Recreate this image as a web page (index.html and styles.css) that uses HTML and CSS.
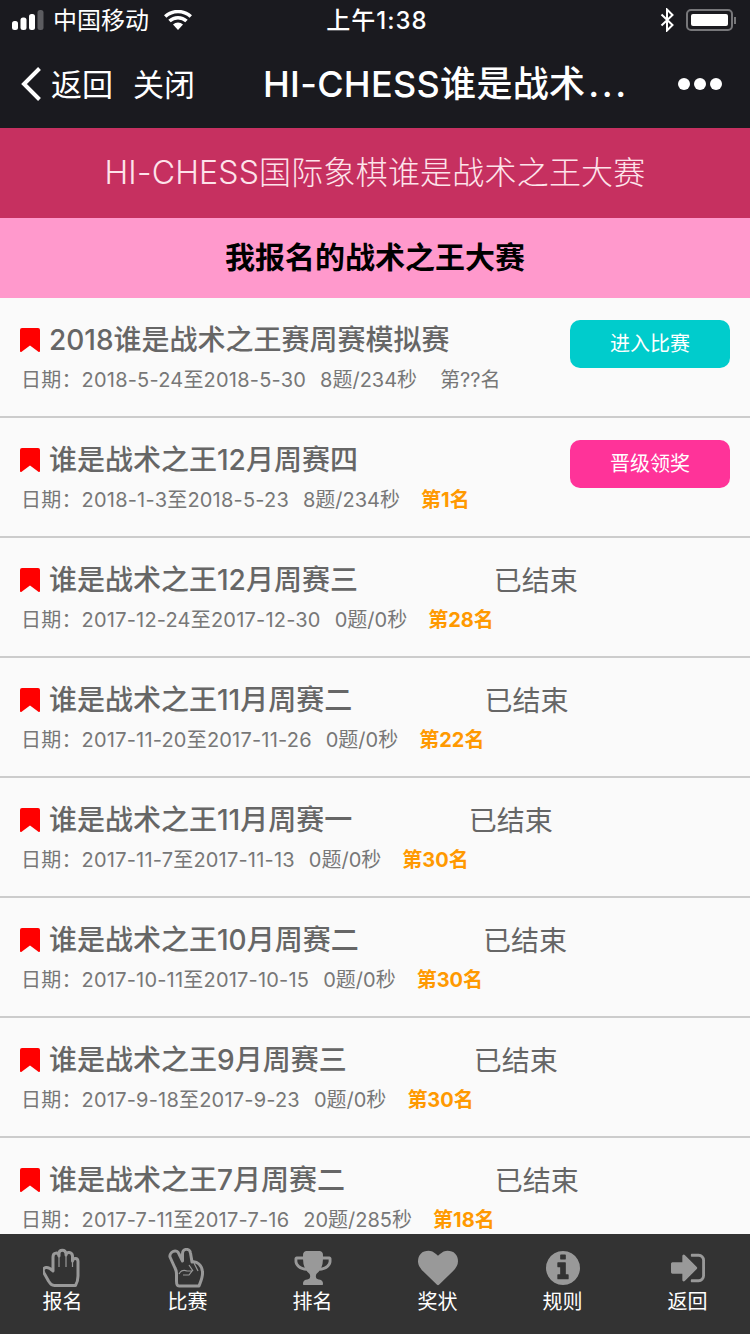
FILE: index.html
```html
<!DOCTYPE html>
<html lang="zh-CN">

<head>
    <meta charset="UTF-8">
    <meta name="viewport" content="width=device-width, initial-scale=1.0">
    <title>HI-CHESS谁是战术之王</title>
    <link rel="stylesheet" href="styles.css">
</head>

<body>
    <!-- Status bar -->
    <div class="status-bar">
        <div class="status-left">
            <svg class="signal" width="32" height="20" viewBox="0 0 32 20">
                <rect x="0" y="11" width="6" height="9" rx="2.500" fill="#fff"/>
                <rect x="8.500" y="7.500" width="6" height="12.500" rx="2.500" fill="#fff"/>
                <rect x="17" y="4" width="6" height="16" rx="2.500" fill="#fff"/>
                <rect x="25.500" y="0" width="6" height="20" rx="2.500" fill="#5c5c60"/>
            </svg>
            <span class="carrier">中国移动</span>
            <svg class="wifi" width="28" height="20" viewBox="0 0 28 20">
                <path d="M14 20l-5-5.500a7.500 7.500 0 0 1 10 0z" fill="#fff"/>
                <path d="M5.500 11a12.500 12.500 0 0 1 17 0" fill="none" stroke="#fff" stroke-width="3.500"/>
                <path d="M1.200 6.500a19 19 0 0 1 25.600 0" fill="none" stroke="#fff" stroke-width="3.500"/>
            </svg>
        </div>
        <div class="status-time">上午1:38</div>
        <div class="status-right">
            <svg class="bluetooth" width="14" height="24" viewBox="0 0 14 24">
                <path d="M1.500 6.500l11 10.500-5.500 5.500v-21l5.500 5.500-11 10.500" fill="none" stroke="#fff" stroke-width="2"/>
            </svg>
            <div class="battery"><div class="battery-fill"></div></div>
            <div class="battery-tip"></div>
        </div>
    </div>

    <!-- Nav bar -->
    <div class="nav-bar">
        <div class="nav-left">
            <svg class="chevron" width="22" height="36" viewBox="0 0 22 36">
                <path d="M19.500 2.500L4 18l15.500 15.500" fill="none" stroke="#fff" stroke-width="4"/>
            </svg>
            <span class="nav-back">返回</span>
            <span class="nav-close">关闭</span>
        </div>
        <div class="nav-title">HI-CHESS谁是战术<span class="nav-dots">...</span></div>
        <div class="nav-more"><i></i><i></i><i></i></div>
    </div>

    <div class="banner">HI-CHESS国际象棋谁是战术之王大赛</div>
    <div class="subhead">我报名的战术之王大赛</div>

    <!-- Contest list -->
    <div class="list">
        <div class="row">
            <div class="info">
                <div class="name"><svg class="mark" viewBox="0 0 20 24"><use href="#bookmark"/></svg>2018谁是战术之王赛周赛模拟赛</div>
                <div class="meta"><span class="date">日期&#65306;2018-5-24至2018-5-30</span><span class="score">8题/234秒</span><span class="rank-none">第??名</span></div>
            </div>
            <a class="btn btn-enter">进入比赛</a>
        </div>
        <div class="row">
            <div class="info">
                <div class="name"><svg class="mark" viewBox="0 0 20 24"><use href="#bookmark"/></svg>谁是战术之王12月周赛四</div>
                <div class="meta"><span class="date">日期&#65306;2018-1-3至2018-5-23</span><span class="score">8题/234秒</span><span class="rank">第1名</span></div>
            </div>
            <a class="btn btn-prize">晋级领奖</a>
        </div>
        <div class="row">
            <div class="info">
                <div class="name"><svg class="mark" viewBox="0 0 20 24"><use href="#bookmark"/></svg>谁是战术之王12月周赛三</div>
                <div class="meta"><span class="date">日期&#65306;2017-12-24至2017-12-30</span><span class="score">0题/0秒</span><span class="rank">第28名</span></div>
            </div>
            <div class="ended">已结束</div>
        </div>
        <div class="row">
            <div class="info">
                <div class="name"><svg class="mark" viewBox="0 0 20 24"><use href="#bookmark"/></svg>谁是战术之王11月周赛二</div>
                <div class="meta"><span class="date">日期&#65306;2017-11-20至2017-11-26</span><span class="score">0题/0秒</span><span class="rank">第22名</span></div>
            </div>
            <div class="ended">已结束</div>
        </div>
        <div class="row">
            <div class="info">
                <div class="name"><svg class="mark" viewBox="0 0 20 24"><use href="#bookmark"/></svg>谁是战术之王11月周赛一</div>
                <div class="meta"><span class="date">日期&#65306;2017-11-7至2017-11-13</span><span class="score">0题/0秒</span><span class="rank">第30名</span></div>
            </div>
            <div class="ended">已结束</div>
        </div>
        <div class="row">
            <div class="info">
                <div class="name"><svg class="mark" viewBox="0 0 20 24"><use href="#bookmark"/></svg>谁是战术之王10月周赛二</div>
                <div class="meta"><span class="date">日期&#65306;2017-10-11至2017-10-15</span><span class="score">0题/0秒</span><span class="rank">第30名</span></div>
            </div>
            <div class="ended">已结束</div>
        </div>
        <div class="row">
            <div class="info">
                <div class="name"><svg class="mark" viewBox="0 0 20 24"><use href="#bookmark"/></svg>谁是战术之王9月周赛三</div>
                <div class="meta"><span class="date">日期&#65306;2017-9-18至2017-9-23</span><span class="score">0题/0秒</span><span class="rank">第30名</span></div>
            </div>
            <div class="ended">已结束</div>
        </div>
        <div class="row">
            <div class="info">
                <div class="name"><svg class="mark" viewBox="0 0 20 24"><use href="#bookmark"/></svg>谁是战术之王7月周赛二</div>
                <div class="meta"><span class="date">日期&#65306;2017-7-11至2017-7-16</span><span class="score">20题/285秒</span><span class="rank">第18名</span></div>
            </div>
            <div class="ended">已结束</div>
        </div>
    </div>

    <!-- Tab bar -->
    <div class="tab-bar">
        <div class="tab">
            <svg class="tab-icon" viewBox="2.500 0 40 40">
                <path d="M14 37.500C11 37.500 10 36 8 33L3.500 25C2 22 3 20 5.500 19.500C8 19 10.500 21 12.500 23V9C12.500 4 18 4 18.500 8V5.500C18.500 1 25 1 25.500 5.500V7C26 3.500 31.500 3.500 32 8V13C32.500 9.500 37.500 9.500 37.500 13.500V28C37.500 33 36.500 35 35 37.500Z" fill="none" stroke="#999" stroke-width="3" stroke-linejoin="round"/>
                <path d="M18.500 8V19M25.500 7V19M32 13V19" fill="none" stroke="#999" stroke-width="1.200"/>
            </svg>
            <span>报名</span>
        </div>
        <div class="tab">
            <svg class="tab-icon" viewBox="1 0 40 40">
                <path d="M6 3.500C9 2 11 3.500 12 6L15.500 13V6C15.500 0 23 0 23.500 5L25 14C30 13 35 17 35.500 24C36 29 34 33 32 38H12C10 38 9.500 36 9.500 33V26C9.500 24 9 22 8 20L3 9C2.500 7 4 4.500 6 3.500Z" fill="none" stroke="#999" stroke-width="3" stroke-linejoin="round"/>
                <path d="M12 26C14 22 17 22 20 23H25L22 27H16M22 17L26 23M27 15L31 23" fill="none" stroke="#999" stroke-width="1.200"/>
            </svg>
            <span>比赛</span>
        </div>
        <div class="tab">
            <svg class="tab-icon" viewBox="-68 -68 1800 1800">
                <path transform="translate(-64 -64)" d="M522 883q-74-162-74-371h-256v96q0 78 94.500 162t235.500 113zm1078-275v-96h-256q0 209-74 371 141-29 235.500-113t94.500-162zm128-128v128q0 71-41.500 143t-112 130-173 97.500-215.500 44.500q-42 54-95 95-38 34-52.500 72.500t-14.500 89.500q0 54 30.500 91t97.500 37q75 0 133.500 45.500t58.500 114.500v64q0 14-9 23t-23 9h-832q-14 0-23-9t-9-23v-64q0-69 58.500-114.500t133.500-45.500q67 0 97.500-37t30.500-91q0-51-14.500-89.500t-52.500-72.500q-53-41-95-95-113-5-215.500-44.500t-173-97.500-112-130-41.500-143v-128q0-40 28-68t68-28h288v-96q0-66 47-113t113-47h576q66 0 113 47t47 113v96h288q40 0 68 28t28 68z" fill="#999"/>
            </svg>
            <span>排名</span>
        </div>
        <div class="tab">
            <svg class="tab-icon" viewBox="0 0 1792 1792">
                <path d="M896 1664q-26 0-44-18l-624-602q-10-8-27.500-26t-55.500-65.500-68-97.500-53.500-121-23.500-138q0-220 127-344t351-124q62 0 126.500 21.500t120 58 95.500 68.500 76 68q36-36 76-68t95.500-68.500 120-58 126.500-21.500q224 0 351 124t127 344q0 221-229 450l-623 600q-18 18-44 18z" fill="#999"/>
            </svg>
            <span>奖状</span>
        </div>
        <div class="tab">
            <svg class="tab-icon" viewBox="-8 -8 1808 1808">
                <path d="M1152 1376v-160q0-14-9-23t-23-9h-96v-512q0-14-9-23t-23-9h-320q-14 0-23 9t-9 23v160q0 14 9 23t23 9h96v320h-96q-14 0-23 9t-9 23v160q0 14 9 23t23 9h448q14 0 23-9t9-23zm-128-896v-160q0-14-9-23t-23-9h-192q-14 0-23 9t-9 23v160q0 14 9 23t23 9h192q14 0 23-9t9-23zm640 416q0 209-103 385.500t-279.500 279.500-385.500 103-385.500-103-279.500-279.500-103-385.500 103-385.500 279.500-279.500 385.500-103 385.500 103 279.500 279.500 103 385.500z" fill="#999"/>
            </svg>
            <span>规则</span>
        </div>
        <div class="tab">
            <svg class="tab-icon" viewBox="-8 -8 1808 1808">
                <path d="M1312 896q0 26-19 45l-544 544q-19 19-45 19t-45-19-19-45v-288h-448q-26 0-45-19t-19-45v-384q0-26 19-45t45-19h448v-288q0-26 19-45t45-19 45 19l544 544q19 19 19 45zm352-352v704q0 119-84.500 203.500t-203.500 84.500h-320q-13 0-22.500-9.500t-9.500-22.500q0-4-1-20t-.5-26.500 3-23.500 10-19.500 20.500-6.500h320q66 0 113-47t47-113v-704q0-66-47-113t-113-47h-288-11-13t-11.500-1-11.500-3-8-5.500-5.500-9-1.500-13.500q0-4-1-20t-.5-26.500 3-23.500 10-19.500 20.500-6.500h320q119 0 203.500 84.500t84.500 203.500z" fill="#999"/>
            </svg>
            <span>返回</span>
        </div>
    </div>

    <svg class="defs" width="0" height="0">
        <symbol id="bookmark" viewBox="0 0 20 24">
            <path d="M2 0h16a2 2 0 0 1 2 2v21a1 1 0 0 1-1.600.8L10 17.500 1.600 23.800A1 1 0 0 1 0 23V2a2 2 0 0 1 2-2z" fill="#ff0000"/>
        </symbol>
    </svg>
</body>

</html>
```

FILE: styles.css
```css
* {
    box-sizing: border-box;
}

body {
    width: 750px;
    height: 1334px;
    margin: 0;
    padding: 0;
    overflow: hidden;
    display: flex;
    flex-direction: column;
    font-family: Inter, "Noto Sans CJK SC", sans-serif;
    background-color: #fafafa;
    color: #666;
}

.defs {
    position: absolute;
}

/* status bar */
.status-bar {
    height: 40px;
    flex: none;
    display: grid;
    grid-template-columns: 1fr auto 1fr;
    align-items: center;
    padding: 0 14px 0 12px;
    background-color: #1a1a1f;
    color: #fff;
    font-size: 24px;
}

.status-left {
    display: flex;
    align-items: center;
}

.carrier {
    margin-left: 9px;
    padding-bottom: 4px;
}

.wifi {
    margin-left: 15px;
}

.status-time {
    padding: 0 0 4px 6px;
    font-weight: 500;
    letter-spacing: 1px;
}

.status-right {
    display: flex;
    align-items: center;
    justify-content: flex-end;
}

.battery {
    width: 47px;
    height: 22px;
    margin-left: 12px;
    padding: 3px;
    border: 2px solid #77777a;
    border-radius: 5px;
}

.battery-fill {
    height: 100%;
    background-color: #fff;
    border-radius: 2px;
}

.battery-tip {
    width: 2px;
    height: 7px;
    margin-left: 1px;
    background-color: #77777a;
}

/* nav bar */
.nav-bar {
    height: 88px;
    flex: none;
    display: flex;
    align-items: center;
    padding: 0 28px 0 20px;
    background-color: #1a1a1f;
    color: #fff;
}

.nav-left {
    width: 243px;
    display: flex;
    align-items: center;
    font-size: 31px;
}

.nav-back {
    margin-left: 9px;
    padding-bottom: 4px;
}

.nav-close {
    margin-left: 20px;
    padding-bottom: 4px;
}

.nav-title {
    padding-bottom: 6px;
    font-size: 36px;
    font-weight: 500;
    letter-spacing: .3px;
    white-space: nowrap;
}

.nav-dots {
    margin-left: 3px;
    letter-spacing: 2.500px;
}

.nav-more {
    margin-left: auto;
    display: flex;
    gap: 4px;
}

.nav-more i {
    width: 12px;
    height: 12px;
    border-radius: 50%;
    background-color: #fff;
}

/* headings */
.banner {
    height: 90px;
    flex: none;
    display: flex;
    align-items: center;
    justify-content: center;
    padding-bottom: 6px;
    background-color: #c63060;
    color: #fde3ea;
    font-size: 32px;
    font-weight: 300;
    letter-spacing: .2px;
}

.subhead {
    height: 80px;
    flex: none;
    display: flex;
    align-items: center;
    justify-content: center;
    padding-bottom: 6px;
    background-color: #ff99cc;
    color: #000;
    font-size: 30px;
    font-weight: 700;
}

/* list */
.list {
    flex: 1;
    min-height: 0;
    overflow: hidden;
}

.row {
    height: 120px;
    display: flex;
    align-items: flex-start;
    padding: 22px 20px 0 20px;
    border-bottom: 2px solid #ccc;
}

.info {
    flex: none;
}

.name {
    display: flex;
    align-items: center;
    height: 40px;
    padding-bottom: 4px;
    font-size: 28px;
    font-weight: 500;
    white-space: nowrap;
}

.mark {
    width: 20px;
    height: 24px;
    margin: 4px 9px 0 0;
}

.meta {
    margin-top: 5px;
    padding-left: 1px;
    color: #777;
    font-size: 20px;
    line-height: 30px;
    white-space: nowrap;
}

.date {
    letter-spacing: .2px;
}

.score {
    margin-left: 14px;
}

.rank {
    margin-left: 21px;
    color: #ff9900;
    font-weight: 700;
}

.rank-none {
    margin-left: 23px;
}

.ended {
    padding-top: 1px;
    font-size: 28px;
    line-height: 40px;
}

.btn {
    width: 160px;
    height: 48px;
    margin-left: auto;
    display: flex;
    align-items: center;
    justify-content: center;
    padding-bottom: 4px;
    border-radius: 10px;
    color: #fff;
    font-size: 20px;
}

.btn-enter {
    background-color: #00cccc;
}

.btn-prize {
    background-color: #ff3399;
}

/* tab bar */
.tab-bar {
    height: 100px;
    flex: none;
    display: grid;
    grid-template-columns: repeat(6, 1fr);
    background-color: #333;
    padding-top: 14px;
}

.tab {
    display: flex;
    flex-direction: column;
    align-items: center;
    color: #fff;
    font-size: 20px;
    line-height: 28px;
}

.tab-icon {
    width: 40px;
    height: 40px;
}
```
